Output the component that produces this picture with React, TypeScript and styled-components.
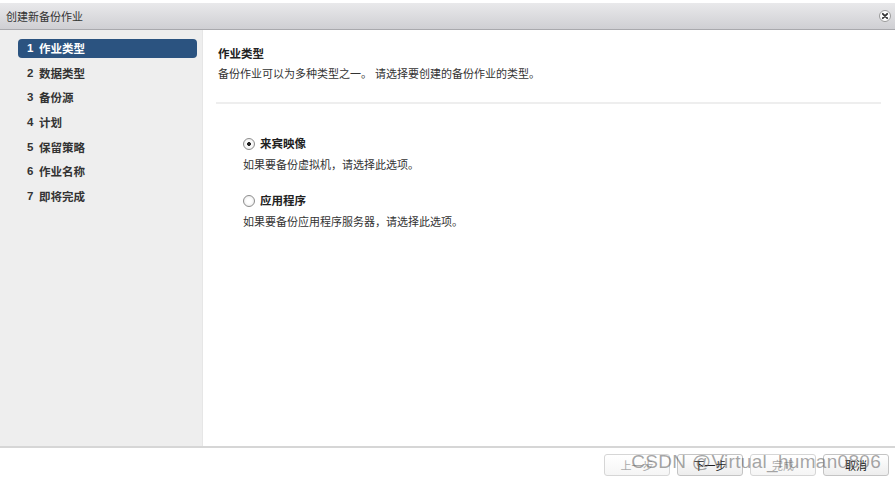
import React from 'react';
import styled, { createGlobalStyle } from 'styled-components';

const GlobalStyle = createGlobalStyle`
  html, body {
    margin: 0;
    padding: 0;
    background: #ffffff;
  }
  body {
    font-family: "Liberation Sans", "Noto Sans CJK SC", sans-serif;
    color: #333;
  }
`;

const steps = ['作业类型', '数据类型', '备份源', '计划', '保留策略', '作业名称', '即将完成'];

const options = [
  { label: '来宾映像', hint: '如果要备份虚拟机，请选择此选项。', checked: true },
  { label: '应用程序', hint: '如果要备份应用程序服务器，请选择此选项。', checked: false },
];

const App: React.FC = () => {
  return (
    <>
      <GlobalStyle />
      <Dialog>
        <TitleBar>
          <Title>创建新备份作业</Title>
          <CloseButton aria-label="close">
            <svg width="12" height="12" viewBox="0 0 12 12">
              <circle cx="6" cy="6" r="5.5" fill="#fff" stroke="#999" />
              <path d="M3.8 3.8 L8.2 8.2 M8.2 3.8 L3.8 8.2" stroke="#333" strokeWidth="1.8" strokeLinecap="round" />
            </svg>
          </CloseButton>
        </TitleBar>
        <Body>
          <Sidebar>
            {steps.map((s, i) => (
              <Step key={s} active={i === 0}>
                <StepNum>{i + 1}</StepNum>
                {s}
              </Step>
            ))}
          </Sidebar>
          <Content>
            <Heading>作业类型</Heading>
            <Intro>备份作业可以为多种类型之一。 请选择要创建的备份作业的类型。</Intro>
            <Divider />
            <Options>
              {options.map((o) => (
                <Option key={o.label}>
                  <OptionLabel>
                    <Radio checked={o.checked} />
                    {o.label}
                  </OptionLabel>
                  <Hint>{o.hint}</Hint>
                </Option>
              ))}
            </Options>
          </Content>
        </Body>
        <Footer>
          <Button disabled>上一步</Button>
          <Button>下一步</Button>
          <Button disabled>完成</Button>
          <Button>取消</Button>
          <Watermark>CSDN @Virtual_human0806</Watermark>
        </Footer>
      </Dialog>
    </>
  );
};

export default App;

const Dialog = styled.div`
  width: 895px;
  height: 482px;
  display: flex;
  flex-direction: column;
  padding-top: 3px;
  box-sizing: border-box;
  background: #fff;
`;

const TitleBar = styled.div`
  height: 27px;
  flex: none;
  display: flex;
  align-items: center;
  justify-content: space-between;
  padding: 0 4px 0 6px;
  background: linear-gradient(#e9e9eb, #cfcfd3);
  border-bottom: 1px solid #a9a9ad;
  box-sizing: border-box;
`;

const Title = styled.div`
  font-size: 11px;
  color: #333;
`;

const CloseButton = styled.div`
  width: 12px;
  height: 12px;
  display: flex;
`;

const Body = styled.div`
  flex: 1;
  display: flex;
  min-height: 0;
`;

const Sidebar = styled.div`
  width: 203px;
  flex: none;
  background: #eeeeee;
  border-right: 1px solid #e6e6e6;
  padding: 9px 5px 0 18px;
  box-sizing: border-box;
  display: flex;
  flex-direction: column;
  gap: 6.1px;
`;

const Step = styled.div<{ active?: boolean }>`
  height: 18.5px;
  display: flex;
  align-items: center;
  padding-left: 9px;
  border-radius: 4px;
  font-size: 11.5px;
  font-weight: bold;
  color: ${(p) => (p.active ? '#fff' : '#333')};
  background: ${(p) => (p.active ? '#2b5380' : 'transparent')};
`;

const StepNum = styled.span`
  width: 12px;
  flex: none;
`;

const Content = styled.div`
  flex: 1;
  padding: 17px 14px 0 13px;
  display: flex;
  flex-direction: column;
`;

const Heading = styled.div`
  font-size: 11.5px;
  font-weight: bold;
  color: #222;
  margin-left: 2px;
  line-height: 14px;
`;

const Intro = styled.div`
  font-size: 11px;
  color: #333;
  margin: 6px 0 0 2px;
  line-height: 14px;
`;

const Divider = styled.div`
  height: 2px;
  background: #eeeeee;
  margin-top: 21px;
  width: 665px;
`;

const Options = styled.div`
  display: flex;
  flex-direction: column;
  gap: 22px;
  padding: 33px 0 0 27px;
`;

const Option = styled.div`
  display: flex;
  flex-direction: column;
  gap: 7px;
`;

const OptionLabel = styled.div`
  display: flex;
  align-items: center;
  gap: 5px;
  font-size: 11.5px;
  font-weight: bold;
  color: #222;
  line-height: 14px;
`;

const Radio = styled.span<{ checked?: boolean }>`
  width: 12px;
  height: 12px;
  border-radius: 50%;
  border: 1px solid #8d8d8d;
  box-sizing: border-box;
  background: radial-gradient(circle, ${(p) => (p.checked ? '#222 0 1.7px,' : '')} #fff 2.2px, #e4e4e4 100%);
`;

const Hint = styled.div`
  font-size: 11px;
  color: #333;
  line-height: 14px;
`;

const Footer = styled.div`
  height: 34px;
  flex: none;
  border-top: 2px solid #d6d6d6;
  display: flex;
  align-items: center;
  justify-content: flex-end;
  gap: 7px;
  padding: 0 6px 0 0;
  position: relative;
`;

const Button = styled.button`
  width: 66px;
  height: 22px;
  border: 1px solid #c4c4c4;
  border-radius: 3px;
  background: linear-gradient(#ffffff, #ededed);
  font-family: "Liberation Sans", "Noto Sans CJK SC", sans-serif;
  font-size: 11px;
  color: #222;
  padding: 0;
  &:disabled {
    color: #aaa;
    border-color: #d6d6d6;
    background: linear-gradient(#ffffff, #f5f5f5);
  }
`;

const Watermark = styled.div`
  position: absolute;
  right: 14px;
  top: 3px;
  font-family: "Liberation Sans", sans-serif;
  font-size: 19px;
  color: rgba(90, 90, 90, 0.55);
  pointer-events: none;
  letter-spacing: 0.3px;
`;
